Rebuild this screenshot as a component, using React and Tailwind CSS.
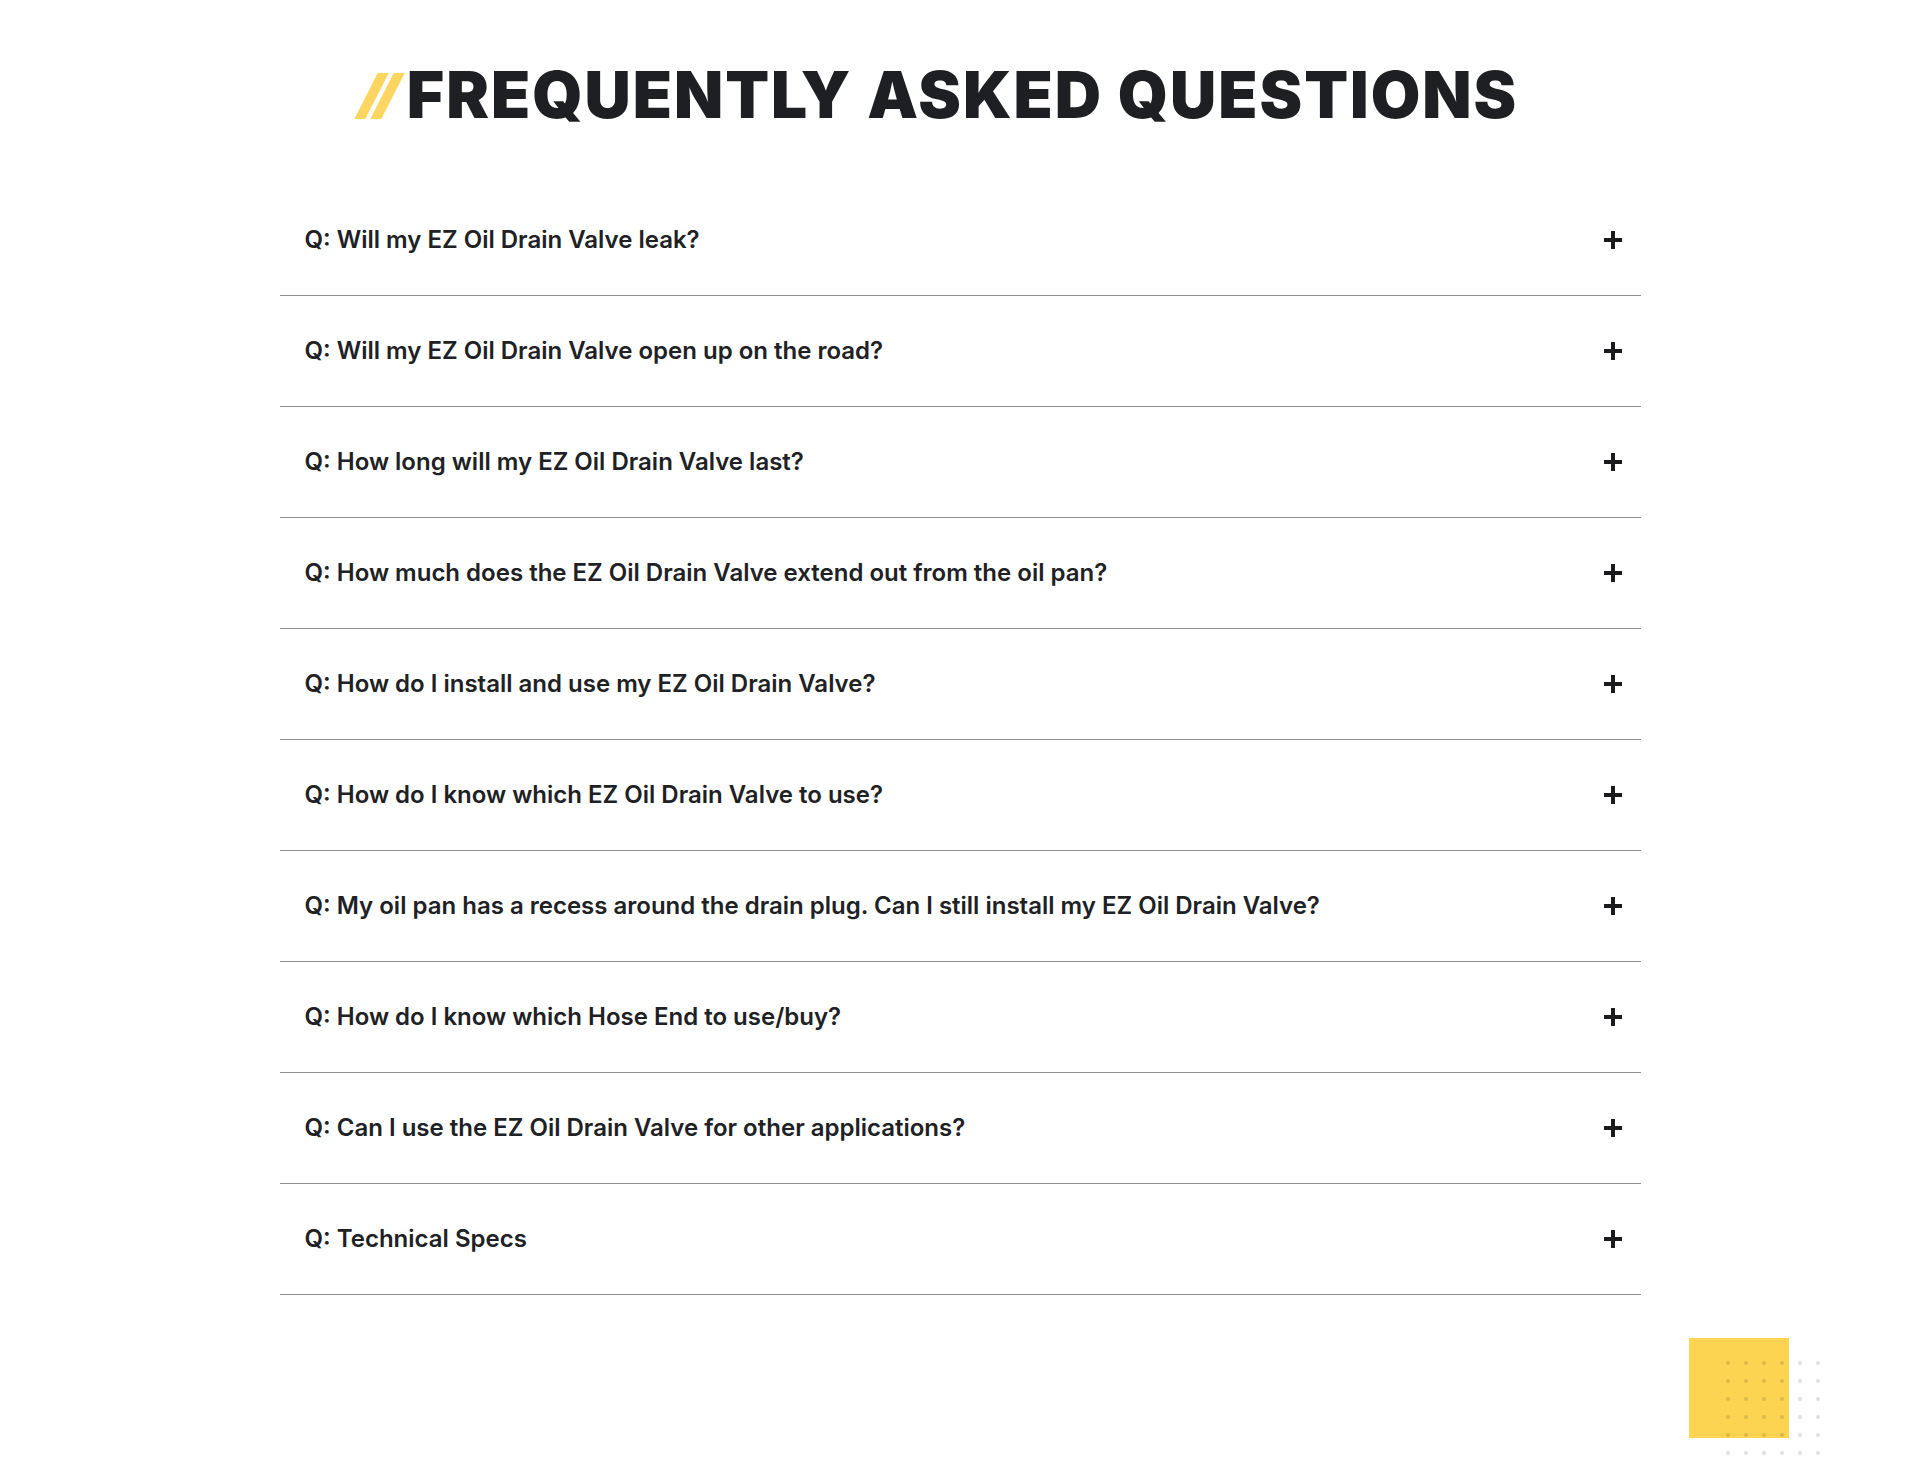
const questions = [
  "Q: Will my EZ Oil Drain Valve leak?",
  "Q: Will my EZ Oil Drain Valve open up on the road?",
  "Q: How long will my EZ Oil Drain Valve last?",
  "Q: How much does the EZ Oil Drain Valve extend out from the oil pan?",
  "Q: How do I install and use my EZ Oil Drain Valve?",
  "Q: How do I know which EZ Oil Drain Valve to use?",
  "Q: My oil pan has a recess around the drain plug. Can I still install my EZ Oil Drain Valve?",
  "Q: How do I know which Hose End to use/buy?",
  "Q: Can I use the EZ Oil Drain Valve for other applications?",
  "Q: Technical Specs",
];

function PlusIcon() {
  return (
    <svg width="18" height="18" viewBox="0 0 18 18" className="shrink-0">
      <rect x="7" y="0" width="4" height="18" fill="#1b1b1d" />
      <rect x="0" y="7" width="18" height="4" fill="#1b1b1d" />
    </svg>
  );
}

function FaqRow({ text }) {
  return (
    <div className="flex h-[111px] items-center justify-between border-b border-[#8e8e8e] pl-[25px] pr-[19px]">
      <span className="text-[24px] font-semibold text-[#202124]">{text}</span>
      <PlusIcon />
    </div>
  );
}

function DotsBadge() {
  const dots = Array.from({ length: 36 });
  return (
    <div className="absolute left-[1689px] top-[1338px] h-[128px] w-[140px]">
      <div className="h-[100px] w-[100px] bg-[#fcd451]" />
      <div className="absolute left-[37px] top-[23px] grid grid-cols-6 gap-x-[14px] gap-y-[14px]">
        {dots.map((_, i) => (
          <span key={i} className="block h-[4px] w-[4px] rounded-full bg-black/[0.12]" />
        ))}
      </div>
    </div>
  );
}

export default function App() {
  return (
    <div className="relative min-h-[1466px] overflow-hidden bg-white font-['Inter',sans-serif]">
      <div className="flex items-center justify-center pt-[63px] pr-[36px]">
        <div className="mr-[14px] flex gap-[5px] pt-[2px]">
          <span className="block h-[46px] w-[11px] skew-x-[-27deg] bg-[#fdd661]" />
          <span className="block h-[46px] w-[11px] skew-x-[-27deg] bg-[#fdd661]" />
        </div>
        <h2 className="text-[64px] font-black leading-none tracking-[2px] text-[#1e1f22]">
          FREQUENTLY ASKED QUESTIONS
        </h2>
      </div>

      <div className="mx-auto mt-[58px] w-[1361px]">
        {questions.map((q) => (
          <FaqRow key={q} text={q} />
        ))}
      </div>

      <DotsBadge />
    </div>
  );
}
